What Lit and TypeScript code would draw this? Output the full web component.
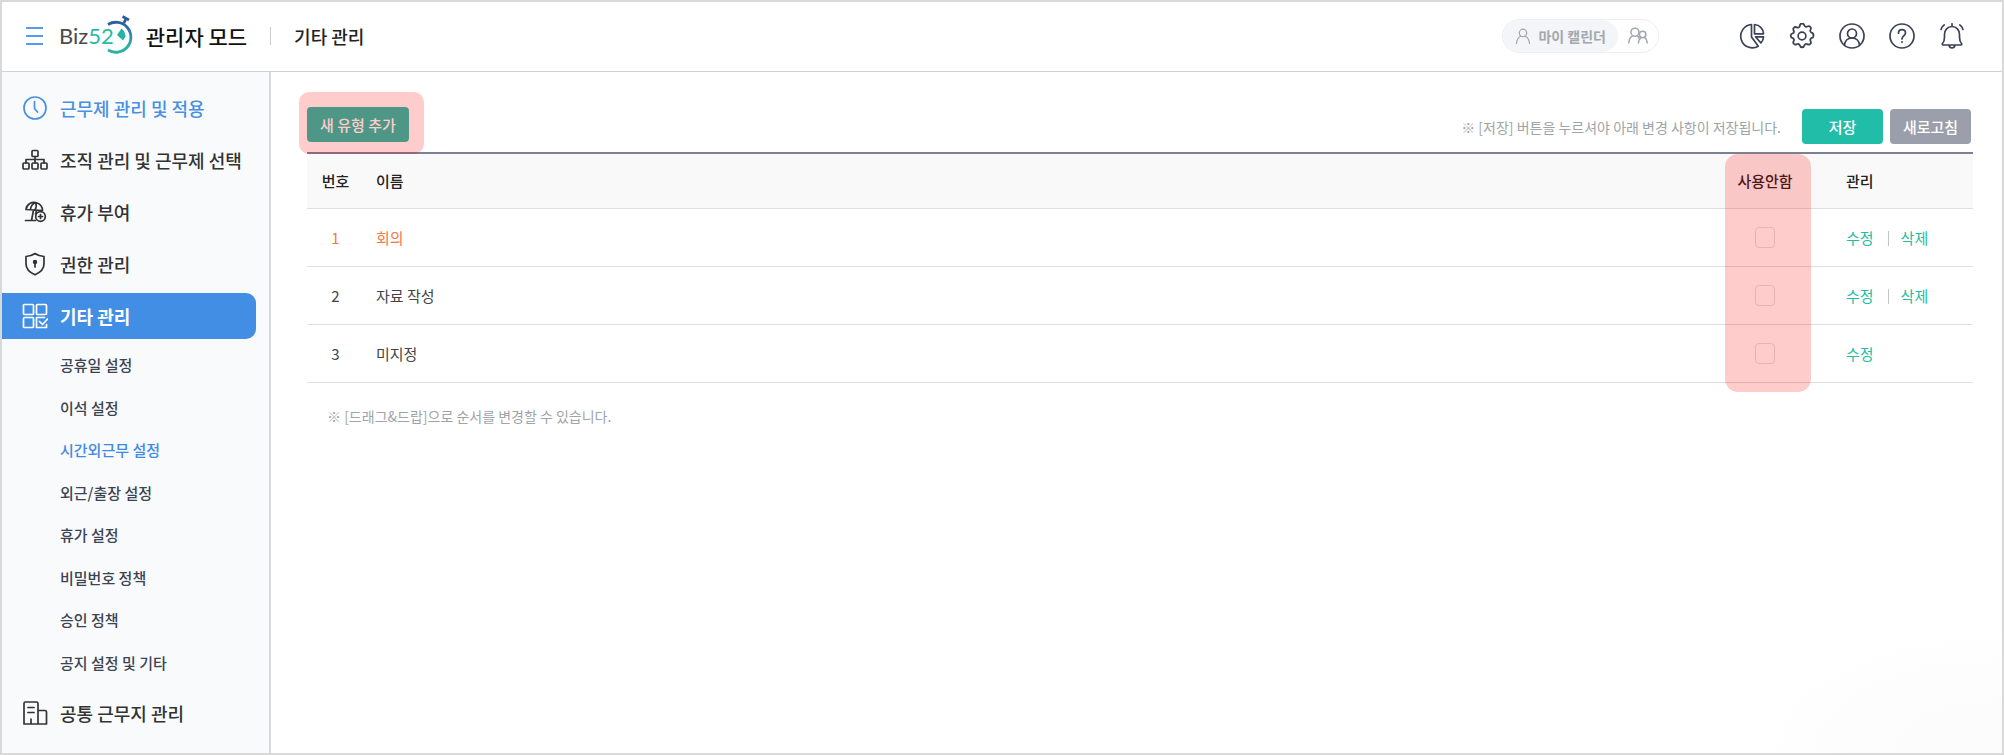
import { LitElement, html, css, svg, nothing } from "lit";
import { customElement, property, state } from "lit/decorators.js";
import { classMap } from "lit/directives/class-map.js";

const icons: Record<string, unknown> = {
  clock: svg`<circle cx="13" cy="13" r="11" /><path d="M12.5 6.5v7l3 3.5" />`,
  org: svg`<rect x="10" y="3.500" width="6" height="6" rx="1" /><rect x="1" y="16" width="6" height="6" rx="1" /><rect x="10" y="16" width="6" height="6" rx="1" /><rect x="19" y="16" width="6" height="6" rx="1" /><path d="M13 9.500V16M4 16v-3.500h18V16" />`,
  vacation: svg`<path d="M4 10.500C4.500 5 10 2 15 4c4 1.500 5.500 4.500 5.500 7.500L4 10.500M8.500 10C9 7 11 4.500 13.500 3.700c1 2.300 1 5-.5 7M11.500 11 9.500 21.500M14.500 12l-1 3M3.500 21.500h10" /><circle cx="18.500" cy="17.500" r="4.800" /><path d="M18.500 15.500v4M16.500 17.500h4" />`,
  shield: svg`<path d="M13 2.500c2.800 2 5.800 2.800 9 3v7.500c0 5-3.500 8.300-9 10.800C7.500 21.300 4 18 4 13V5.500c3.200-.2 6.200-1 9-3z" /><circle cx="13" cy="11" r="1.400" fill="currentColor" /><path d="M13 11v5" />`,
  grid: svg`<rect x="1.500" y="1.500" width="10" height="10" rx="1" /><rect x="14.500" y="1.500" width="10" height="10" rx="1" /><rect x="1.500" y="14.500" width="10" height="10" rx="1" /><path d="M24.500 21.500v3h-10v-10h8M17.500 18.500l3 3 5-5.500" />`,
  building: svg`<path d="M2 24V3.500c0-1 .5-1.500 1.500-1.500h11c1 0 1.500.5 1.500 1.500V24M16 10.500h7c1 0 1.500.5 1.500 1.500v12H2M6 7.500h6M6 12.500h6M9 19v5" />`,
  pie: svg`<path d="M12.500 1.500a11.700 11.700 0 1 0 6.800 21.800L12.500 14z" /><path d="M15.500 1.500v9.300h9C24.300 5.600 20.500 2 15.500 1.500zM16.500 13.800h8c0 2.400-1 4.500-2.600 6.200z" />`,
  gear: svg`<path d="M10.800 3.300c.3-1.200 1-1.900 2.200-1.900s1.900.7 2.200 1.900c.3 1 1.600 1.600 2.600 1 1.100-.6 2.100-.6 2.900.2s.8 1.800.2 2.900c-.6 1 0 2.300 1 2.600 1.200.3 1.900 1.800 1.900 3s-.7 1.900-1.900 2.200c-1 .3-1.600 1.600-1 2.600.6 1.100.6 2.100-.2 2.900s-1.800.8-2.900.2c-1-.6-2.300 0-2.600 1-.3 1.200-1 1.900-2.200 1.900s-1.900-.7-2.200-1.900c-.3-1-1.600-1.600-2.600-1-1.100.6-2.100.6-2.900-.2s-.8-1.800-.2-2.900c.6-1 0-2.300-1-2.600-1.200-.3-1.900-1-1.900-2.200s.7-1.900 1.900-2.200c1-.3 1.600-1.600 1-2.600-.6-1.100-.6-2.100.2-2.900s1.800-.8 2.900-.2c1 .6 2.300 0 2.600-1z" transform="translate(13 13) scale(1.06) translate(-12.900 -13.200)" /><circle cx="13" cy="13" r="3.900" />`,
  account: svg`<circle cx="13" cy="13" r="12" /><circle cx="13" cy="10.500" r="4.500" /><path d="M5.500 22c.6-4.300 3.500-7 7.500-7s6.900 2.700 7.500 7" />`,
  help: svg`<circle cx="13" cy="13" r="12" /><path d="M9.500 10.200c0-2.200 1.500-3.500 3.500-3.500s3.500 1.300 3.500 3.200c0 2.600-3.500 2.900-3.500 6.100M13 18.800v.4" />`,
  bell: svg`<path d="M3.500 20.500c1.700-1.700 2-3.500 2-6.500v-2.500c0-4.500 3-8 7.500-8s7.500 3.500 7.500 8V14c0 3 .3 4.800 2 6.500.5.700.2 1.500-.6 1.500H4.100c-.8 0-1.100-.8-.6-1.500zM13 3.500V.8M10 22.200c.3 1.800 1.400 2.800 3 2.800s2.700-1 3-2.800M2 6.500c.4-2 1.500-3.600 3.200-4.500M24 6.500c-.4-2-1.500-3.600-3.200-4.500" />`,
  person: svg`<circle cx="13" cy="8" r="6" /><path d="M2.500 25c.5-6 3-9.500 6.500-11.500M23.500 25c-.5-6-3-9.500-6.500-11.500" />`,
  people: svg`<circle cx="9" cy="8" r="5.200" /><path d="M1 22c.3-5 2-7.500 5-9.200M15 17c-.5-2-1.400-3.200-3-4.200" /><circle cx="19" cy="11" r="4.200" /><path d="M13.500 22c.3-3.500 1.200-5.500 3-7M25 22c-.3-3.500-1.200-5.500-3-7" />`,
};

const icon = (name: string, size = 26) =>
  html`<svg class="icon" viewBox="0 0 26 26" width=${size} height=${size} aria-hidden="true">${icons[name]}</svg>`;

const shared = css`
  * {
    box-sizing: border-box;
  }
  a {
    color: inherit;
    text-decoration: none;
  }
  button {
    font: inherit;
    color: inherit;
    border: 0;
    padding: 0;
    background: none;
    cursor: pointer;
  }
  ul {
    list-style: none;
    margin: 0;
    padding: 0;
  }
  .icon {
    display: block;
    flex: none;
    fill: none;
    stroke: currentColor;
    stroke-width: 1.7;
    stroke-linecap: round;
    stroke-linejoin: round;
  }
`;

@customElement("app-header")
export class AppHeader extends LitElement {
  static styles = [
    shared,
    css`
      :host {
        display: block;
      }
      .bar {
        display: flex;
        align-items: center;
        height: 70px;
        padding: 0 37px 2px 24px;
        border-bottom: 1px solid #cdd1d3;
        background: #fff;
      }
      .menu {
        display: grid;
        gap: 6px;
        width: 17px;
        margin-right: 16px;
      }
      .menu span {
        height: 2px;
        background: #5b9ae6;
      }
      .logo {
        display: flex;
        align-items: center;
        font: 22px/26px Lato, sans-serif;
        color: #4a4a4a;
      }
      .logo b {
        font-weight: 400;
        color: #27bba5;
      }
      .watch {
        display: block;
        margin: 0 0 4px -9px;
      }
      .title {
        margin: 0 0 0 13px;
        font-size: 21px;
        font-weight: 500;
        line-height: 30px;
        color: #111;
      }
      .crumb {
        margin-left: 23px;
        padding-left: 23px;
        font-size: 18px;
        font-weight: 500;
        line-height: 18px;
        color: #222;
        border-left: 1px solid #ccc;
      }
      .calendar {
        display: flex;
        align-items: center;
        height: 34px;
        margin-left: auto;
        border: 1px solid #eceff1;
        border-radius: 17px;
        color: #a3a8ae;
        font-size: 14px;
        font-weight: 700;
      }
      .mine {
        display: flex;
        align-items: center;
        gap: 7px;
        height: 32px;
        padding: 0 12px;
        border-radius: 16px;
        background: #f3f5f8;
      }
      .team {
        padding: 0 10px;
      }
      .calendar .icon {
        stroke-width: 2;
      }
      .tools {
        display: flex;
        gap: 24px;
        margin-left: 80px;
        color: #3b4256;
      }
    `,
  ];

  render() {
    const tools = [
      ["pie", "통계"],
      ["gear", "설정"],
      ["account", "내 정보"],
      ["help", "도움말"],
      ["bell", "알림"],
    ];
    return html`
      <header class="bar">
        <button class="menu" aria-label="메뉴"><span></span><span></span><span></span></button>
        <a class="logo" href="#">
          <span>Biz<b>52</b></span>
          <svg class="watch" viewBox="0 0 28 40" width="28" height="40" aria-hidden="true">
            <defs>
              <linearGradient id="ring" x1="0" y1="0" x2="0" y2="1">
                <stop offset="0" stop-color="#2c5d9f" />
                <stop offset=".5" stop-color="#2f8fb0" />
                <stop offset=".8" stop-color="#27b3a3" />
              </linearGradient>
            </defs>
            <path d="M3 10.500A15 15 0 1 1 3 36" fill="none" stroke="url(#ring)" stroke-width="2.800" />
            <path d="M17.500 2.500l6.500 3.500M21 4.500l-2 4.500" fill="none" stroke="#2c5d9f" stroke-width="2.800" />
            <path d="M12 21l4.500-6.500q4 3.500 4 8l-2.500 4z" fill="#27b3a3" />
          </svg>
        </a>
        <h1 class="title">관리자 모드</h1>
        <span class="crumb">기타 관리</span>
        <div class="calendar">
          <button class="mine">${icon("person", 16)}<span>마이 캘린더</span></button>
          <button class="team" aria-label="팀 캘린더">${icon("people", 20)}</button>
        </div>
        <nav class="tools">
          ${tools.map(([name, label]) => html`<button aria-label=${label}>${icon(name)}</button>`)}
        </nav>
      </header>
    `;
  }
}

@customElement("side-nav")
export class SideNav extends LitElement {
  static styles = [
    shared,
    css`
      :host {
        display: block;
        padding: 13px 0 17px;
        border-right: 2px solid #d6d8db;
        background: #f8fafc;
      }
      .list {
        display: grid;
        gap: 6px;
      }
      .item {
        display: flex;
        align-items: center;
        gap: 12px;
        height: 46px;
        margin-right: 13px;
        padding-left: 20px;
        font-size: 18px;
        font-weight: 500;
        line-height: 26px;
        white-space: nowrap;
        color: #333;
        border-radius: 0 10px 10px 0;
      }
      .item.linked {
        color: #4a90e2;
      }
      .item.open {
        color: #fff;
        font-weight: 700;
        background: #438ee5;
      }
      .sub {
        display: grid;
        grid-auto-rows: 1fr;
        min-height: 340px;
        margin-top: 5px;
        padding-left: 58px;
        font-size: 15px;
        font-weight: 500;
        line-height: 22px;
        color: #3b4452;
      }
      .sub li {
        display: flex;
        align-items: center;
      }
      .current {
        color: #4189e6;
      }
    `,
  ];

  private items = [
    { icon: "clock", label: "근무제 관리 및 적용", linked: true },
    { icon: "org", label: "조직 관리 및 근무제 선택" },
    { icon: "vacation", label: "휴가 부여" },
    { icon: "shield", label: "권한 관리" },
    {
      icon: "grid",
      label: "기타 관리",
      sub: [
        "공휴일 설정",
        "이석 설정",
        "시간외근무 설정",
        "외근/출장 설정",
        "휴가 설정",
        "비밀번호 정책",
        "승인 정책",
        "공지 설정 및 기타",
      ],
    },
    { icon: "building", label: "공통 근무지 관리" },
  ];

  render() {
    return html`<nav>
      <ul class="list">
        ${this.items.map(
          (item) => html`<li>
            <a class=${classMap({ item: true, linked: !!item.linked, open: !!item.sub })} href="#"
              >${icon(item.icon)}<span>${item.label}</span></a
            >
            ${item.sub
              ? html`<ul class="sub">
                  ${item.sub.map(
                    (label) =>
                      html`<li>
                        <a class=${classMap({ current: label === "시간외근무 설정" })} href="#">${label}</a>
                      </li>`
                  )}
                </ul>`
              : nothing}
          </li>`
        )}
      </ul>
    </nav>`;
  }
}

interface WorkType {
  name: string;
  removable: boolean;
  disabled: boolean;
}

@customElement("type-table")
export class TypeTable extends LitElement {
  @property({ attribute: false }) types: WorkType[] = [];

  static styles = [
    shared,
    css`
      :host {
        display: block;
        position: relative;
      }
      :host::after {
        content: "";
        position: absolute;
        top: 2px;
        right: 162px;
        bottom: -9px;
        width: 86px;
        border-radius: 13px;
        background: rgba(255, 0, 0, 0.2);
        pointer-events: none;
      }
      table {
        width: 100%;
        table-layout: fixed;
        border-collapse: separate;
        border-spacing: 0;
        border-top: 2px solid #7c8095;
        font-size: 15px;
        line-height: 22px;
        color: #444;
      }
      th,
      td {
        height: 58px;
        padding: 0;
        text-align: left;
        font-weight: 400;
        border-bottom: 1px solid #dfdfdf;
      }
      thead th {
        height: 55px;
        font-weight: 500;
        color: #222;
        background: #f9f9f9;
      }
      .no {
        width: 57px;
        text-align: center;
      }
      .name {
        padding-left: 12px;
      }
      .off {
        width: 82px;
        text-align: center;
      }
      .manage {
        width: 167px;
        padding-left: 40px;
      }
      .first {
        color: #f37748;
      }
      .check {
        appearance: none;
        display: block;
        width: 20px;
        height: 21px;
        margin: 0 auto;
        border: 1px solid #e2e2e2;
        border-radius: 4px;
        background: #fff;
      }
      .check:checked {
        background: #22bda9;
      }
      .actions {
        display: flex;
        align-items: center;
        color: #22bda0;
      }
      .actions button + button {
        margin-left: 14px;
      }
      .actions button + button::before {
        content: "";
        display: inline-block;
        width: 1px;
        height: 15px;
        margin-right: 12px;
        vertical-align: -2px;
        background: #c4c4c4;
      }
    `,
  ];

  render() {
    return html`<table>
      <thead>
        <tr>
          <th class="no" scope="col">번호</th>
          <th class="name" scope="col">이름</th>
          <th class="off" scope="col">사용안함</th>
          <th class="manage" scope="col">관리</th>
        </tr>
      </thead>
      <tbody>
        ${this.types.map(
          (type, i) => html`<tr>
            <td class=${classMap({ no: true, first: i === 0 })}>${i + 1}</td>
            <td class=${classMap({ name: true, first: i === 0 })}>${type.name}</td>
            <td class="off">
              <input class="check" type="checkbox" aria-label="${type.name} 사용안함" .checked=${type.disabled} />
            </td>
            <td class="manage">
              <div class="actions">
                <button>수정</button>${type.removable ? html`<button>삭제</button>` : nothing}
              </div>
            </td>
          </tr>`
        )}
      </tbody>
    </table>`;
  }
}

@customElement("app-root")
export class AppRoot extends LitElement {
  @state() private types: WorkType[] = [
    { name: "회의", removable: true, disabled: false },
    { name: "자료 작성", removable: true, disabled: false },
    { name: "미지정", removable: false, disabled: false },
  ];

  static styles = [
    shared,
    css`
      :host {
        box-sizing: border-box;
        display: grid;
        grid-template: auto 1fr / 269px minmax(0, 1fr);
        min-height: 100vh;
        border: 2px solid #d9d9d9;
        background: #fff;
        font-family: "Noto Sans CJK KR", sans-serif;
      }
      app-header {
        grid-column: 1 / -1;
      }
      main {
        padding: 35px 29px 35px 36px;
        background: radial-gradient(ellipse 260px 130px at 100% 100%, #fcfcfc 40%, #fff 100%);
      }
      .toolbar {
        display: flex;
        align-items: flex-start;
        justify-content: space-between;
        padding-bottom: 8px;
        font-size: 15px;
        line-height: 22px;
      }
      .spot {
        position: relative;
      }
      .spot::after {
        content: "";
        position: absolute;
        z-index: 1;
        inset: -15px -15px -12px -8px;
        border-radius: 10px;
        background: rgba(255, 0, 0, 0.2);
        pointer-events: none;
      }
      .btn {
        display: block;
        height: 35px;
        border-radius: 4px;
        font-weight: 500;
        color: #fff;
        background: #22bda9;
      }
      .add {
        padding: 0 13px;
      }
      .save {
        display: flex;
        align-items: center;
        gap: 7px;
        padding: 2px 2px 0 0;
      }
      .save .btn {
        width: 81px;
      }
      .save .refresh {
        background: #9b9eab;
      }
      .hint {
        margin: 0;
        font-size: 14px;
        line-height: 22px;
        color: #a0a3a8;
      }
      .save .hint {
        margin-right: 14px;
      }
      .order {
        padding: 22px 20px;
      }
    `,
  ];

  render() {
    return html`
      <app-header></app-header>
      <side-nav></side-nav>
      <main>
        <div class="toolbar">
          <div class="spot"><button class="btn add">새 유형 추가</button></div>
          <div class="save">
            <p class="hint">※ [저장] 버튼을 누르셔야 아래 변경 사항이 저장됩니다.</p>
            <button class="btn">저장</button>
            <button class="btn refresh">새로고침</button>
          </div>
        </div>
        <type-table .types=${this.types}></type-table>
        <p class="hint order">※ [드래그&amp;드랍]으로 순서를 변경할 수 있습니다.</p>
      </main>
    `;
  }
}
